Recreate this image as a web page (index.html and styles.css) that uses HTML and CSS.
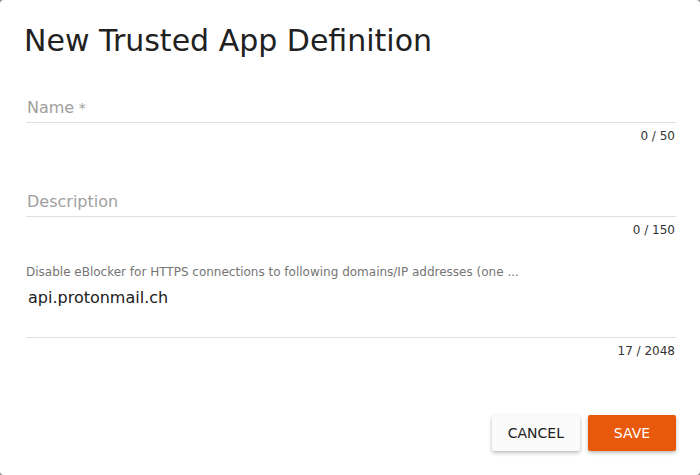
FILE: index.html
```html
<!DOCTYPE html>
<html lang="en">
<head>
<meta charset="utf-8">
<title>New Trusted App Definition</title>
<link rel="stylesheet" href="styles.css">
</head>
<body>
<div class="dialog">
  <h1 class="title">New Trusted App Definition</h1>

  <div class="field field-name">
    <div class="field-line"><span class="placeholder">Name<span class="req"> *</span></span></div>
    <div class="counter">0 / 50</div>
  </div>

  <div class="field field-desc">
    <div class="field-line"><span class="placeholder">Description</span></div>
    <div class="counter">0 / 150</div>
  </div>

  <div class="field field-domains">
    <div class="float-label">Disable eBlocker for HTTPS connections to following domains/IP addresses (one ...</div>
    <div class="field-area"><span class="value">api.protonmail.ch</span></div>
    <div class="counter">17 / 2048</div>
  </div>

  <div class="actions">
    <button class="btn btn-cancel">Cancel</button>
    <button class="btn btn-save">Save</button>
  </div>
</div>
</body>
</html>
```

FILE: styles.css
```css
html, body {
  margin: 0;
  padding: 0;
}
body {
  background: #8a8a8a;
  font-family: "DejaVu Sans", sans-serif;
}
.dialog {
  width: 700px;
  height: 475px;
  box-sizing: border-box;
  background: #fff;
  border-radius: 4px;
  padding: 23px 24px 0 24px;
  display: flex;
  flex-direction: column;
}
.title {
  margin: 0;
  font-size: 30px;
  line-height: 36px;
  font-weight: normal;
  color: #212121;
}
.field {
  margin-left: 2px;
  display: flex;
  flex-direction: column;
}
.field-name { margin-top: 38px; }
.field-desc { margin-top: 48px; }
.field-domains { margin-top: 28px; }
.field-line {
  font-size: 16px;
  line-height: 20px;
  padding: 1px 0 4px 0;
  border-bottom: 1px solid #e0e0e0;
}
.placeholder {
  color: #a0a0a0;
  padding-left: 1px;
}
.req {
  font-size: 14px;
}
.counter {
  margin-top: 6px;
  align-self: flex-end;
  font-size: 12px;
  line-height: 14px;
  color: #333;
  margin-right: 1px;
}
.float-label {
  font-size: 12px;
  line-height: 14px;
  color: #757575;
}
.field-area {
  margin-top: 9px;
  height: 49px;
  font-size: 16px;
  line-height: 20px;
  border-bottom: 1px solid #e0e0e0;
  padding-left: 2px;
  color: #212121;
}
.actions {
  margin-top: 57px;
  display: flex;
  justify-content: flex-end;
  gap: 8px;
}
.btn {
  font-family: "DejaVu Sans", sans-serif;
  font-size: 14px;
  text-transform: uppercase;
  height: 36px;
  min-width: 88px;
  padding: 0 16px;
  border: none;
  border-radius: 2px;
  cursor: pointer;
}
.btn-cancel {
  background: #fafafa;
  color: #212121;
  box-shadow: 0 2px 4px rgba(0,0,0,0.22), 0 1px 2px rgba(0,0,0,0.08);
}
.btn-save {
  background: #e9590c;
  color: #fff;
  box-shadow: 0 2px 4px rgba(0,0,0,0.22), 0 1px 2px rgba(0,0,0,0.08);
}
```
